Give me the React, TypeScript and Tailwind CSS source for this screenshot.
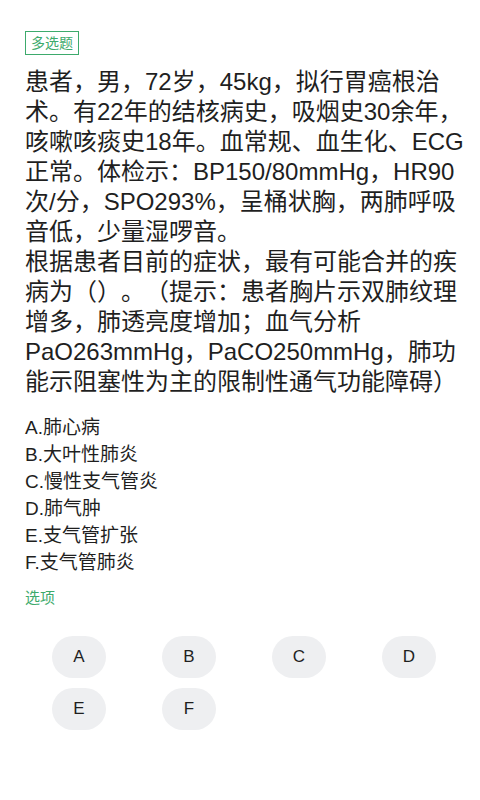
import React from "react";

const font = { fontFamily: '"Liberation Sans", "Noto Sans CJK SC", sans-serif' };

const lines = [
  "患者，男，72岁，45kg，拟行胃癌根治",
  "术。有22年的结核病史，吸烟史30余年，",
  "咳嗽咳痰史18年。血常规、血生化、ECG",
  "正常。体检示：BP150/80mmHg，HR90",
  "次/分，SPO293%，呈桶状胸，两肺呼吸",
  "音低，少量湿啰音。",
  "根据患者目前的症状，最有可能合并的疾",
  "病为（）。（提示：患者胸片示双肺纹理",
  "增多，肺透亮度增加；血气分析",
  "PaO263mmHg，PaCO250mmHg，肺功",
  "能示阻塞性为主的限制性通气功能障碍）",
];

export default function App() {
  const options = [
    "A.肺心病",
    "B.大叶性肺炎",
    "C.慢性支气管炎",
    "D.肺气肿",
    "E.支气管扩张",
    "F.支气管肺炎",
  ];
  const letters = ["A", "B", "C", "D", "E", "F"];
  return (
    <div
      className="w-[480px] min-h-[800px] bg-white text-[#1f1f1f] [text-spacing-trim:space-all]"
      style={font}
    >
      <div className="pt-[31px] pl-[25px] pr-[10px]">
        <div className="inline-flex items-center h-[24px] px-[5px] border border-[#3daa6c] text-[#3daa6c] text-[14px] leading-none">
          多选题
        </div>
        <div className="mt-[12px] text-[24px] leading-[30px]">
          {lines.map((l, i) => (
            <div key={i} className="whitespace-nowrap">
              {l}
            </div>
          ))}
        </div>
        <div className="mt-[17px] flex flex-col text-[19px] leading-[27px]">
          {options.map((o) => (
            <div key={o} className="whitespace-nowrap">{o}</div>
          ))}
        </div>
        <div className="mt-[12px] text-[15px] text-[#3daa6c] leading-[20px]">选项</div>
      </div>
      <div className="mt-[28px] pl-[24px] grid grid-cols-[repeat(4,110px)] gap-y-[10px]">
        {letters.map((l) => (
          <div key={l} className="flex justify-center">
            <div className="w-[54px] h-[42px] rounded-full bg-[#eeeff1] flex items-center justify-center text-[17px] text-[#1f1f1f]">
              {l}
            </div>
          </div>
        ))}
      </div>
    </div>
  );
}
